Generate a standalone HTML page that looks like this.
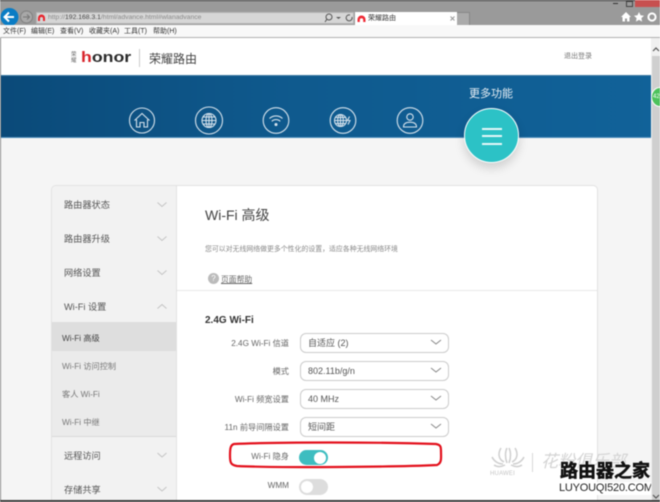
<!DOCTYPE html>
<html><head><meta charset="utf-8">
<style>
html,body{margin:0;padding:0;width:660px;height:502px;overflow:hidden;background:#fff}
body{font-family:"Liberation Sans","Noto Sans CJK SC",sans-serif;position:relative}
#w{position:absolute;left:0;top:0;width:660px;height:502px;overflow:hidden;filter:blur(.5px)}
.a{position:absolute;white-space:nowrap}
.m{top:27px;font-size:7px;line-height:9px;color:#333}
.s{left:64px;font-size:9.200px;line-height:14px;color:#555}
.sub{left:62px;font-size:8.200px;line-height:12px;color:#777}
.lab{right:371px;font-size:8.200px;line-height:12px;color:#666;text-align:right}
.sel{left:300px;width:147px;height:18px;border:1px solid #ccc;border-radius:6px;background:#fff;font-size:9px;line-height:19px;color:#555;text-indent:7px}
svg{position:absolute;overflow:visible}
</style></head><body><div id="w">

<!-- browser chrome -->
<div class="a" style="left:0;top:0;width:660px;height:25px;background:#9a9a9a"></div>
<div class="a" style="left:0;top:0;width:660px;height:1px;background:#333"></div>
<div class="a" style="left:36px;top:12px;width:318px;height:12px;background:#d6d6d6;border:1px solid #b5b5b5;box-sizing:border-box"></div>
<div class="a" style="left:48px;top:12px;font-size:6.800px;line-height:12px;color:#8a8a8a">http://<span style="color:#444">192.168.3.1</span>/html/advance.html#wlanadvance</div>
<svg style="left:37px;top:13px" width="9" height="9" viewBox="0 0 9 9"><path d="M1 8V5a3.500 3.500 0 0 1 7 0v3H6V5.500a1.500 1.500 0 0 0-3 0V8z" fill="#e8242c"/></svg>
<svg style="left:0;top:6px" width="36" height="24" viewBox="0 0 36 24"><circle cx="9.500" cy="11" r="9" fill="#0a7cc4"/><path d="M5 11h9M9 6.500 4.500 11 9 15.500" fill="none" stroke="#fff" stroke-width="2"/><circle cx="26.500" cy="11" r="6" fill="#a8a8a8" stroke="#808080"/><path d="M23 11h6M27 8.500l2.500 2.500-2.500 2.500" fill="none" stroke="#777" stroke-width="1"/></svg>
<svg style="left:325px;top:13px" width="30" height="10" viewBox="0 0 30 10"><circle cx="4" cy="4" r="3" fill="none" stroke="#555"/><path d="M2 6 0 9" stroke="#555"/><path d="M11 4l2.500 2L16 4z" fill="#555"/><path d="M25 2a3 3 0 1 0 2 2" fill="none" stroke="#555"/></svg>
<div class="a" style="left:355px;top:12px;width:102px;height:13px;background:#fff"></div>
<div class="a" style="left:457px;top:12px;width:13px;height:13px;background:#aaa;border-top:1px solid #888;border-right:1px solid #888;box-sizing:border-box"></div>
<svg style="left:357px;top:15px" width="9" height="8" viewBox="0 0 9 8"><path d="M.5 7V4.500a4 4 0 0 1 8 0V7H6.200V5a1.700 1.700 0 0 0-3.400 0V7z" fill="#ee2a35"/></svg>
<div class="a" style="left:368px;top:14px;font-size:7px;line-height:9px;color:#333">荣耀路由</div>
<svg style="left:450px;top:16px" width="5" height="5" viewBox="0 0 5 5"><path d="M.5.500l4 4M4.500.500l-4 4" stroke="#999"/></svg>
<div class="a" style="left:635px;top:0;width:25px;height:7px;background:#c75050"></div>
<div class="a" style="left:613px;top:3px;width:5px;height:1px;background:#333"></div>
<div class="a" style="left:626px;top:1px;width:5px;height:4px;border:1px solid #444"></div>
<svg style="left:620px;top:11px" width="38" height="12" viewBox="0 0 38 12"><path d="M6 1 1 6h1.500v4.500h2.500V7.500h2v3h2.500V6H11z" fill="#fff"/><path d="m19 1 1.500 3.300 3.500.4-2.600 2.400.7 3.500L19 8.900l-3.100 1.700.7-3.500L14 4.700l3.500-.4z" fill="#fff"/><circle cx="32" cy="6" r="3.600" fill="none" stroke="#fff" stroke-width="2"/></svg>

<!-- menu bar -->
<div class="a" style="left:0;top:25px;width:660px;height:13px;box-sizing:border-box;background:#f8f8f8;border-bottom:1px solid #b0b0b0"></div>
<div class="a m" style="left:3px">文件(F)</div>
<div class="a m" style="left:31px">编辑(E)</div>
<div class="a m" style="left:60px">查看(V)</div>
<div class="a m" style="left:89px">收藏夹(A)</div>
<div class="a m" style="left:124px">工具(T)</div>
<div class="a m" style="left:153px">帮助(H)</div>

<!-- page header -->
<div class="a" style="left:0;top:38px;width:651px;height:37px;background:#fff"></div>
<div class="a" style="left:71px;top:52px;font-size:5.500px;line-height:6px;width:6px;color:#666;white-space:normal">荣耀</div>
<div class="a" style="left:81px;top:48px;font-size:15px;line-height:20px;font-weight:bold;color:#2a2a2a;transform:scaleX(1.18);transform-origin:0 0"><span style="color:#d8232a">h</span>onor</div>
<div class="a" style="left:139px;top:49px;width:1px;height:18px;background:#ccc"></div>
<div class="a" style="left:149px;top:51px;font-size:12px;line-height:16px;color:#444">荣耀路由</div>
<div class="a" style="left:564px;top:52px;font-size:7px;line-height:10px;color:#777">退出登录</div>

<!-- blue band -->
<div class="a" style="left:0;top:75px;width:651px;height:63px;background:linear-gradient(90deg,#0b4a79,#0f5a8e 45%,#116299);border-top:1px solid #3d7aa3;border-bottom:1px solid #4f8fbd;box-sizing:border-box"></div>

<!-- page bg -->
<div class="a" style="left:0;top:138px;width:651px;height:362px;background:#f5f5f5"></div>

<!-- nav icons -->
<svg style="left:120px;top:75px" width="320" height="63" viewBox="0 0 320 63" fill="none" stroke="#d5e2ec" stroke-width="1.100">
<circle cx="22" cy="45.500" r="12.500"/><path d="M14.500 45.500 22 38.500l7.500 7M16.500 44.500V52h3.500v-4.500h4V52h3.500v-7.500"/>
<circle cx="89" cy="45.500" r="13.500"/><circle cx="89" cy="45.500" r="7"/><ellipse cx="89" cy="45.500" rx="3" ry="7"/><path d="M82 45.500h14M83 42h12M83 49h12M89 38.500v14"/>
<circle cx="156" cy="45.500" r="12.800"/><path d="M149.500 43.500a9.500 9.500 0 0 1 13 0M151.800 46.300a6 6 0 0 1 8.400 0"/><circle cx="156" cy="49.500" r="1" fill="#d5e2ec"/>
<circle cx="223" cy="45.500" r="12.800"/><circle cx="220.500" cy="45.500" r="6"/><ellipse cx="220.500" cy="45.500" rx="2.800" ry="6"/><path d="M214.500 45.500h12M215.500 42.500h10M215.500 48.500h10M220.500 39.500v12M229.500 41.500l-2 4h2.500l-2 4"/>
<circle cx="290" cy="45.500" r="12.800"/><circle cx="290" cy="42" r="3.200"/><path d="M283.500 52c0-3.500 3-4.800 6.500-4.800s6.500 1.300 6.500 4.800z"/>
</svg>

<div class="a" style="left:469px;top:87px;font-size:11px;line-height:15px;color:#e8eff5">更多功能</div>
<div class="a" style="left:464px;top:108px;width:55px;height:55px;box-sizing:border-box;border-radius:50%;background:#2cc2c6;border:1.500px solid #fff;box-shadow:0 5px 10px rgba(0,0,0,.16)"></div>
<div class="a" style="left:482px;top:128px;width:20px;height:1.500px;background:#e6f8f8"></div>
<div class="a" style="left:482px;top:135px;width:20px;height:1.500px;background:#e6f8f8"></div>
<div class="a" style="left:482px;top:143px;width:20px;height:1.500px;background:#e6f8f8"></div>

<!-- card -->
<div class="a" style="left:51px;top:185px;width:547px;height:320px;box-sizing:border-box;background:#fff;border:1px solid #e2e2e2;border-radius:5px;overflow:hidden">
  <div class="a" style="left:0;top:0;width:124px;height:320px;background:#f2f2f2;border-right:1px solid #e2e2e2"></div>
  <div class="a" style="left:0;top:136px;width:124px;height:115px;background:#ebebeb;border-bottom:1px solid #d9d9d9;box-sizing:border-box"></div>
  <div class="a" style="left:0;top:136px;width:124px;height:29px;background:#dedede"></div>
  <div class="a" style="left:125px;top:104px;width:420px;height:1px;background:#e8e8e8"></div>
</div>

<div class="a s" style="top:198px">路由器状态</div>
<div class="a s" style="top:232px">路由器升级</div>
<div class="a s" style="top:266px">网络设置</div>
<div class="a s" style="top:300px">Wi-Fi 设置</div>
<div class="a sub" style="top:333px;color:#444">Wi-Fi 高级</div>
<div class="a sub" style="top:361px">Wi-Fi 访问控制</div>
<div class="a sub" style="top:389px">客人 Wi-Fi</div>
<div class="a sub" style="top:417px">Wi-Fi 中继</div>
<div class="a s" style="top:449px">远程访问</div>
<div class="a s" style="top:483px">存储共享</div>
<svg style="left:157px;top:200px" width="10" height="300" viewBox="0 0 10 300" fill="none" stroke="#c4c4c4" stroke-width="1">
<path d="M.5 2.500l4.500 4 4.500-4M.5 36.500l4.500 4 4.500-4M.5 70.500l4.500 4 4.500-4M.5 108.500l4.500-4 4.500 4M.5 253l4.500 4 4.500-4M.5 287l4.500 4 4.500-4"/></svg>

<!-- main -->
<div class="a" style="left:205px;top:206px;font-size:14px;line-height:18px;color:#444">Wi-Fi 高级</div>
<div class="a" style="left:205px;top:245px;font-size:6.900px;line-height:10px;color:#888">您可以对无线网络做更多个性化的设置，适应各种无线网络环境</div>
<div class="a" style="left:208px;top:273px;width:11px;height:11px;border-radius:50%;background:#bbb;color:#fff;font-size:8px;line-height:11px;text-align:center">?</div>
<div class="a" style="left:221px;top:274px;font-size:7.800px;line-height:11px;color:#666;text-decoration:underline">页面帮助</div>
<div class="a" style="left:205px;top:314px;font-size:10px;line-height:13px;font-weight:bold;color:#333">2.4G Wi-Fi</div>

<div class="a lab" style="top:338px">2.4G Wi-Fi 信道</div>
<div class="a sel" style="top:333px">自适应 (2)</div>
<div class="a lab" style="top:366px">模式</div>
<div class="a sel" style="top:361px">802.11b/g/n</div>
<div class="a lab" style="top:394px">Wi-Fi 频宽设置</div>
<div class="a sel" style="top:389px">40 MHz</div>
<div class="a lab" style="top:422px">11n 前导间隔设置</div>
<div class="a sel" style="top:417px">短间距</div>
<svg style="left:430px;top:339px" width="12" height="90" viewBox="0 0 12 90" fill="none" stroke="#888" stroke-width="1"><path d="M1 1l5 4 5-4M1 29l5 4 5-4M1 57l5 4 5-4M1 85l5 4 5-4"/></svg>

<div class="a lab" style="top:451px">Wi-Fi 隐身</div>
<div class="a" style="left:299px;top:450px;width:29px;height:15px;border-radius:8px;background:#3dbdc0"></div>
<div class="a" style="left:314px;top:451.500px;width:12px;height:12px;border-radius:50%;background:#fff"></div>
<div class="a lab" style="top:480px">WMM</div>
<div class="a" style="left:299px;top:479px;width:29px;height:16px;border-radius:8px;background:#ddd"></div>
<div class="a" style="left:301px;top:481px;width:12px;height:12px;border-radius:50%;background:#fff"></div>

<!-- red annotation -->
<svg style="left:228px;top:440px" width="216" height="30" viewBox="0 0 216 30" fill="none"><path d="M6 4C50 2 150 2 208 4c5 1 5 3 5 8 0 6 1 11-4 13-40 2-160 3-200 1-6-1-7-3-7-10C2 10 2 5 6 4z" stroke="#e3101c" stroke-width="2.200"/></svg>

<!-- watermark -->
<svg style="left:490px;top:447px" width="36" height="28" viewBox="0 0 36 28" fill="none" stroke="#cfcfcf" stroke-width="1.500"><path d="M14 15C8 12 8 6 11 1M17 16c-2-5-2-11 0-15M19 16c2-5 2-11 0-15M22 15c6-3 6-9 3-14M13 17c-5 0-9-3-11-7M23 17c5 0 9-3 11-7M15 18c-4 2-8 2-11 0M21 18c4 2 8 2 11 0"/></svg>
<div class="a" style="left:490px;top:471px;font-size:6px;line-height:7px;color:#c4c4c4;letter-spacing:.2px">HUAWEI</div>
<div class="a" style="left:532px;top:453px;width:1px;height:19px;background:#d8d8d8"></div>
<div class="a" style="left:541px;top:452px;font-size:17px;line-height:20px;color:#d4d4d4;font-style:italic">花粉俱乐部</div>
<div class="a" style="left:560px;top:461px;font-size:18px;line-height:21px;font-weight:bold;color:#111;-webkit-text-stroke:.6px #111;text-shadow:1px 0 0 #fff,-1px 0 0 #fff,0 1px 0 #fff,0 -1px 0 #fff">路由器之家</div>
<div class="a" style="left:559px;top:482px;font-size:11px;line-height:13px;color:#222;letter-spacing:-.2px;background:#fff">LUYOUQI520.COM</div>

<!-- scrollbar -->
<div class="a" style="left:651px;top:38px;width:9px;height:462px;background:#f0f0f0"></div>
<div class="a" style="left:652px;top:56px;width:8px;height:444px;background:#cfcfcf"></div>
<svg style="left:652px;top:47px" width="8" height="5" viewBox="0 0 8 5"><path d="M1 4l3-3 3 3" fill="none" stroke="#555" stroke-width="1.200"/></svg>
<svg style="left:652px;top:494px" width="8" height="5" viewBox="0 0 8 5"><path d="M1 1l3 3 3-3" fill="none" stroke="#555" stroke-width="1.200"/></svg>
<div class="a" style="left:651px;top:87px;width:18px;height:20px;border-radius:50%;background:#4cc25c;border:1px solid #fff;box-sizing:border-box"></div>
<div class="a" style="left:653px;top:93px;font-size:6px;line-height:8px;color:#fff">42</div>

<div class="a" style="left:0;top:38px;width:1px;height:462px;background:#888"></div>
<div class="a" style="left:0;top:500px;width:660px;height:2px;background:#3a3a3a"></div>
</div></body></html>
